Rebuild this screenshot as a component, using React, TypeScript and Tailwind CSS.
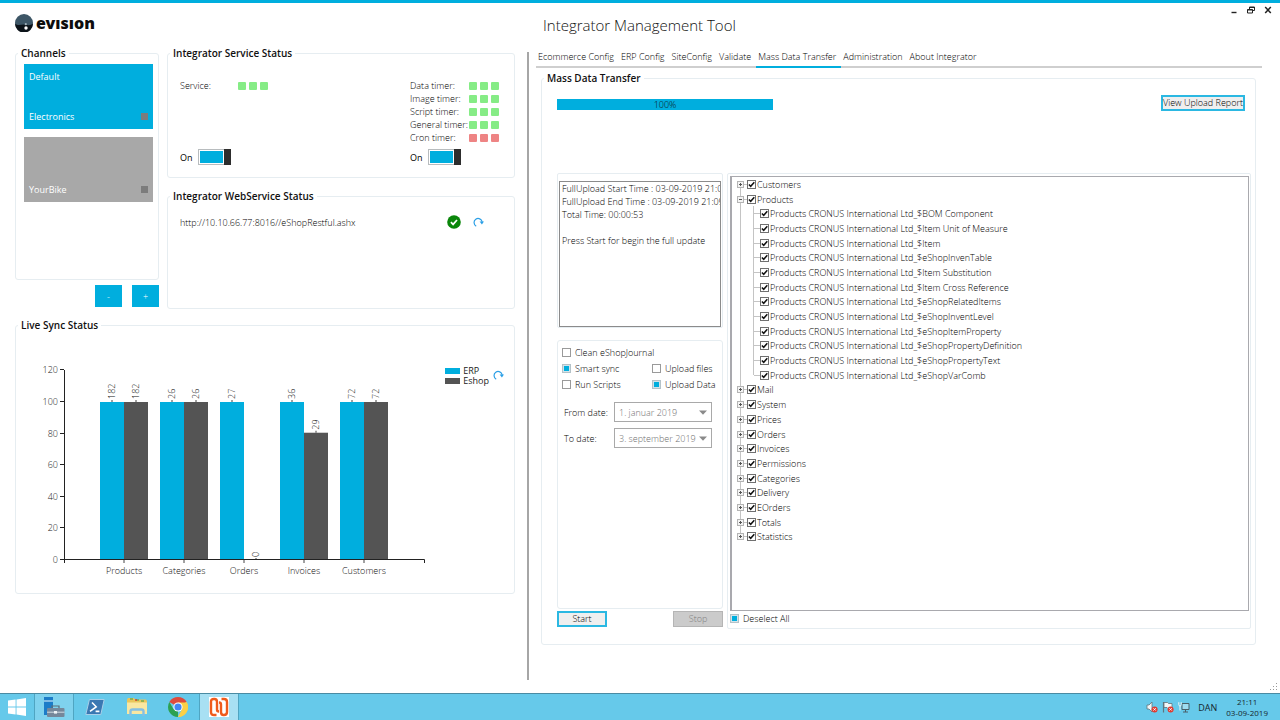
import React, { useState } from 'react';

interface PanelProps {
  title?: string;
  className?: string;
  bodyClassName?: string;
  children?: React.ReactNode;
}

interface Channel {
  title: string;
  name: string;
  active: boolean;
}

interface TreeNode {
  label: string;
  children?: string[];
}

const channels: Channel[] = [
  { title: 'Default', name: 'Electronics', active: true },
  { title: '', name: 'YourBike', active: false },
];

const timers = [
  { name: 'Data timer:', ok: true },
  { name: 'Image timer:', ok: true },
  { name: 'Script timer:', ok: true },
  { name: 'General timer:', ok: true },
  { name: 'Cron timer:', ok: false },
];

const tabs = ['Ecommerce Config', 'ERP Config', 'SiteConfig', 'Validate', 'Mass Data Transfer', 'Administration', 'About Integrator'];

const chartData = [
  { name: 'Products', erp: 182, eshop: 182 },
  { name: 'Categories', erp: 26, eshop: 26 },
  { name: 'Orders', erp: 27, eshop: 0 },
  { name: 'Invoices', erp: 36, eshop: 29 },
  { name: 'Customers', erp: 72, eshop: 72 },
];

const productTables = [
  'BOM Component',
  'Item Unit of Measure',
  'Item',
  'eShopInvenTable',
  'Item Substitution',
  'Item Cross Reference',
  'eShopRelatedItems',
  'eShopInventLevel',
  'eShopItemProperty',
  'eShopPropertyDefinition',
  'eShopPropertyText',
  'eShopVarComb',
];

const tree: TreeNode[] = [
  { label: 'Customers' },
  { label: 'Products', children: productTables.map((t) => `Products CRONUS International Ltd_$${t}`) },
  { label: 'Mail' },
  { label: 'System' },
  { label: 'Prices' },
  { label: 'Orders' },
  { label: 'Invoices' },
  { label: 'Permissions' },
  { label: 'Categories' },
  { label: 'Delivery' },
  { label: 'EOrders' },
  { label: 'Totals' },
  { label: 'Statistics' },
];

const logText = `FullUpload Start Time : 03-09-2019 21:08:15
FullUpload End Time : 03-09-2019 21:09:08
Total Time: 00:00:53

Press Start for begin the full update`;

const Panel: React.FC<PanelProps> = ({ title, className = '', bodyClassName = '', children }) => (
  <fieldset className={`min-w-0 rounded-[3px] border border-[#e6edf1] ${className}`}>
    {title && <legend className="ml-[2px] px-[3px] text-[10px] leading-[14px] font-semibold text-[#111]">{title}</legend>}
    <div className={bodyClassName}>{children}</div>
  </fieldset>
);

const Dots = ({ ok }: { ok: boolean }) => (
  <span className="flex gap-[3px]">
    {[0, 1, 2].map((i) => (
      <span key={i} className={`h-2 w-2 rounded-[1px] ${ok ? 'bg-[#86ec86]' : 'bg-[#ee8484]'}`} />
    ))}
  </span>
);

const Toggle = ({ id, label }: { id: string; label: string }) => {
  const [on, setOn] = useState(true);
  return (
    <div className="flex items-center">
      <label htmlFor={id} className="w-[18px] font-normal">{on ? 'On' : 'Off'}</label>
      <button
        id={id}
        type="button"
        role="switch"
        aria-checked={on}
        aria-label={label}
        onClick={() => setOn(!on)}
        className={`flex h-4 w-[33px] border border-[#b8bcbe] bg-white ${on ? 'justify-end' : 'flex-row-reverse'}`}
      >
        <span className={`m-px h-3 flex-1 ${on ? 'bg-[#00aede]' : 'bg-[#a6a6a6]'}`} />
        <span className="-my-px -mr-px h-4 w-[7px] bg-[#2d2d2d]" />
      </button>
    </div>
  );
};

const RefreshButton = ({ label }: { label: string }) => (
  <button type="button" aria-label={label}>
    <svg width="11" height="11" viewBox="0 0 11 11" fill="none">
      <path d="M3.2 9.2A4.1 4.1 0 1 1 9.2 5" stroke="#2b9fe6" strokeWidth="1.2" />
      <path d="M6.6 4.6H11L8.9 7.4Z" fill="#2b9fe6" />
    </svg>
  </button>
);

const CheckBox = ({ id, label, defaultChecked = false }: { id: string; label: string; defaultChecked?: boolean }) => (
  <div className="flex items-center gap-1">
    <input
      id={id}
      type="checkbox"
      defaultChecked={defaultChecked}
      className="h-[9px] w-[9px] shrink-0 appearance-none border border-[#9a9a9a] bg-white checked:border-[#b4c2c8] checked:bg-[#00aede] checked:shadow-[inset_0_0_0_1px_#d3e3ea]"
    />
    <label htmlFor={id} className="whitespace-nowrap">{label}</label>
  </div>
);

const TreeCheck = ({ id, label }: { id: string; label: string }) => (
  <>
    <span className="grid">
      <input
        id={id}
        type="checkbox"
        defaultChecked
        className="peer h-[9px] w-[9px] appearance-none border border-[#707070] bg-white [grid-area:1/1]"
      />
      <svg
        width="9"
        height="9"
        viewBox="0 0 9 9"
        fill="none"
        className="pointer-events-none invisible [grid-area:1/1] peer-checked:visible"
      >
        <path d="M1.9 4.4 3.7 6.3 7.3 2.2" stroke="#111" strokeWidth="1.5" />
      </svg>
    </span>
    <label htmlFor={id} className="pl-px whitespace-nowrap">{label}</label>
  </>
);

const TreeRow = ({ label, id, position, expanded }: { label: string; id: string; position: 'first' | 'middle' | 'last'; expanded: boolean }) => (
  <div className="flex flex-1 items-center">
    <span className="grid w-[7px] items-center justify-items-center self-stretch">
      <span
        className={`w-px bg-[#c4c4c4] [grid-area:1/1] ${
          position === 'first' ? 'h-1/2 self-end' : position === 'last' ? 'h-1/2 self-start' : 'h-full'
        }`}
      />
      <button type="button" aria-label={expanded ? `Collapse ${label}` : `Expand ${label}`} className="[grid-area:1/1]">
        <svg width="7" height="7" viewBox="0 0 7 7" fill="none" className="block">
          <rect x="0.5" y="0.5" width="6" height="6" fill="#f4f4f4" stroke="#b4b4b4" />
          <path d={expanded ? 'M2 3.5H5' : 'M2 3.5H5M3.5 2V5'} stroke="#555" />
        </svg>
      </button>
    </span>
    <span className="h-px w-[3px] bg-[#c4c4c4]" />
    <TreeCheck id={id} label={label} />
  </div>
);

const TreeLeaf = ({ label, id, last }: { label: string; id: string; last: boolean }) => (
  <div className="flex flex-1 items-center">
    <span className="flex w-[7px] justify-center self-stretch">
      <span className="w-px bg-[#c4c4c4]" />
    </span>
    <span className="ml-[9px] flex w-[7px] items-center self-stretch">
      <span className={`w-px bg-[#c4c4c4] ${last ? 'h-1/2 self-start' : 'h-full'}`} />
      <span className="h-px flex-1 bg-[#c4c4c4]" />
    </span>
    <TreeCheck id={id} label={label} />
  </div>
);

const DateSelect = ({ id, label, value }: { id: string; label: string; value: string }) => (
  <div className="flex items-center justify-between">
    <label htmlFor={id}>{label}</label>
    <span className="grid w-[98px] items-center">
      <select
        id={id}
        disabled
        className="h-5 w-full appearance-none border border-[#a9a9a9] bg-white pl-1 text-[#707070] opacity-100 [grid-area:1/1]"
      >
        <option>{value}</option>
      </select>
      <svg width="8" height="5" viewBox="0 0 8 5" className="pointer-events-none mr-[5px] justify-self-end [grid-area:1/1]">
        <path d="M0 0.4H8L4 4.8Z" fill="#8a8a8a" />
      </svg>
    </span>
  </div>
);

const Logo = () => (
  <div className="flex items-center gap-[3px]">
    <svg width="18" height="18" viewBox="0 0 18 18">
      <circle cx="9" cy="9" r="9" fill="#3d5666" />
      <path d="M0 9.6C3 12.4 6 10.4 9 10.6 12 10.8 15 12.2 18 9.6A9 9 0 0 1 0 9.6Z" fill="#0c1319" />
      <circle cx="10.8" cy="10.2" r="1.1" fill="#9fb0ba" />
      <circle cx="11" cy="14" r="1.7" fill="#fff" />
    </svg>
    <span className="font-['Noto_Sans'] text-[16px] leading-[18px] font-black text-[#0d0d0d]">evısıon</span>
  </div>
);

const scaleY = (value: number) => 195 - value * 1.58;

const SyncChart = () => (
  <svg
    width="400"
    height="220"
    viewBox="0 0 400 220"
    className="shrink-0 overflow-visible text-[9px]"
    role="img"
    aria-label="Live sync status chart"
  >
    {chartData.map((d, i) => {
      const center = 94 + i * 60;
      const max = Math.max(d.erp, d.eshop);
      const erpTop = scaleY((d.erp / max) * 100);
      const eshopTop = scaleY((d.eshop / max) * 100);
      return (
        <g key={d.name}>
          <rect x={center - 24} y={erpTop} width="24" height={195 - erpTop} fill="#00aede" />
          <rect x={center} y={eshopTop} width="24" height={195 - eshopTop} fill="#545454" />
          <path d={`M${center - 12} ${erpTop}v-2M${center + 12} ${eshopTop}v-2M${center} 195v3`} stroke="#444" />
          <text transform={`translate(${center - 9} ${erpTop - 3}) rotate(-90)`} fill="#111">{d.erp}</text>
          <text transform={`translate(${center + 15} ${eshopTop - 3}) rotate(-90)`} fill="#111">{d.eshop}</text>
          <text x={center} y="209" textAnchor="middle" fill="#111">{d.name}</text>
        </g>
      );
    })}
    <path d="M34.5 5V198M34 194.5H394.5V198" stroke="#222" fill="none" />
    {[0, 20, 40, 60, 80, 100, 120].map((v) => (
      <g key={v}>
        <path d={`M30 ${Math.round(scaleY(v)) - 0.5}H34`} stroke="#222" />
        <text x="28" y={scaleY(v) + 3} textAnchor="end" fill="#222">{v}</text>
      </g>
    ))}
  </svg>
);

const LeftPane = () => (
  <section className="min-w-0 pr-3 pl-[15px]">
    <div className="grid grid-cols-[144px_1fr] gap-x-2">
      <div>
        <Panel title="Channels" className="h-[234px]" bodyClassName="flex flex-col gap-2 pt-1 pr-[5px] pl-2">
          {channels.map((channel) => (
            <button
              key={channel.name}
              type="button"
              className={`flex h-[65px] flex-col justify-between px-[5px] py-[6px] text-left font-normal text-white ${
                channel.active ? 'bg-[#00aede]' : 'bg-[#a8a8a8]'
              }`}
            >
              <span>{channel.title}</span>
              <span className="flex w-full items-center justify-between">
                {channel.name}
                <span className="h-[7px] w-[7px] bg-[#7c7c7c]" />
              </span>
            </button>
          ))}
        </Panel>
        <div className="mt-[5px] flex justify-end gap-[10px]">
          <button type="button" aria-label="Remove channel" className="h-[22px] w-[27px] bg-[#00aede] text-white">-</button>
          <button type="button" aria-label="Add channel" className="h-[22px] w-[27px] bg-[#00aede] text-white">+</button>
        </div>
      </div>
      <div className="flex min-w-0 flex-col gap-[11px]">
        <Panel title="Integrator Service Status" className="h-[132px]" bodyClassName="flex justify-between pt-[19px] pr-[15px] pl-3">
          <div className="flex flex-col justify-between">
            <div className="flex items-center">
              <span className="w-[58px]">Service:</span>
              <Dots ok />
            </div>
            <Toggle id="service-toggle" label="Service" />
          </div>
          <div className="flex flex-col gap-[5px]">
            <div>
              {timers.map((timer) => (
                <div key={timer.name} className="flex items-center">
                  <span className="w-[59px] whitespace-nowrap">{timer.name}</span>
                  <Dots ok={timer.ok} />
                </div>
              ))}
            </div>
            <Toggle id="timer-toggle" label="Timers" />
          </div>
        </Panel>
        <Panel title="Integrator WebService Status" className="h-[120px]" bodyClassName="flex items-center justify-between pt-3 pr-[30px] pl-3">
          <span>http://10.10.66.77:8016//eShopRestful.ashx</span>
          <span className="flex items-center gap-3">
            <svg width="14" height="14" viewBox="0 0 14 14" fill="none">
              <circle cx="7" cy="7" r="6.8" fill="#0a860a" />
              <path d="M3.9 7.2 6.1 9.4 10 5" stroke="#fff" strokeWidth="1.7" />
            </svg>
            <RefreshButton label="Refresh web service" />
          </span>
        </Panel>
      </div>
    </div>
    <Panel title="Live Sync Status" className="mt-[9px] h-[276px]" bodyClassName="flex justify-between pt-[33px] pr-[10px] pl-[14px]">
      <SyncChart />
      <div className="flex items-start gap-1 pt-px">
        <ul className="text-[9px] leading-[10px] font-normal text-[#222]">
          <li className="flex items-center gap-[3px]"><span className="h-[6px] w-[15px] bg-[#00aede]" />ERP</li>
          <li className="flex items-center gap-[3px]"><span className="h-[6px] w-[15px] bg-[#545454]" />Eshop</li>
        </ul>
        <span className="pt-1"><RefreshButton label="Refresh sync status" /></span>
      </div>
    </Panel>
  </section>
);

const RightPane = () => {
  const [activeTab, setActiveTab] = useState('Mass Data Transfer');

  return (
    <section className="mt-[6px] min-w-0 border-l-2 border-[#a6a6a6] pr-[18px] pl-[7px]">
      <nav className="flex h-4 border-b-2 border-[#cfcfcf]">
        {tabs.map((tab) => (
          <button
            key={tab}
            type="button"
            onClick={() => setActiveTab(tab)}
            className={`-mb-[2px] flex h-4 items-start border-b-2 pr-[5px] pl-[2px] leading-[9px] whitespace-nowrap ${
              tab === activeTab ? 'border-[#00aede]' : 'border-transparent'
            }`}
          >
            {tab}
          </button>
        ))}
      </nav>
      <Panel title="Mass Data Transfer" className="mt-[3px] mr-[6px] ml-[5px] h-[574px]" bodyClassName="pr-1 pl-[15px]">
        <div className="flex items-start justify-between pt-[10px] pr-[6px]">
          <div className="mt-[4px] h-[11px] w-[216px] bg-[#00aede] text-center leading-[12px] text-[#111]" role="progressbar" aria-valuenow={100}>
            100%
          </div>
          <button type="button" className="h-4 border-2 border-[#2bb8e2] bg-[#efefef] leading-[12px] whitespace-nowrap">View Upload Report</button>
        </div>
        <div className="mt-[62px] grid grid-cols-[166px_1fr] gap-x-1">
          <div>
            <div className="h-[155px] rounded-[2px] border border-[#e6edf1] px-px pt-[7px]">
              <textarea
                readOnly
                aria-label="Upload log"
                value={logText}
                className="block h-[146px] w-full resize-none overflow-hidden border border-[#8b8b8b] pr-0 pl-[2px] whitespace-pre"
              />
            </div>
            <Panel className="mt-3 h-[269px]" bodyClassName="pt-[5px] pr-[10px] pl-1">
              <div className="grid grid-cols-[90px_1fr] gap-y-[3px]">
                <div className="col-span-2"><CheckBox id="clean" label="Clean eShopJournal" /></div>
                <CheckBox id="smart" label="Smart sync" defaultChecked />
                <CheckBox id="files" label="Upload files" />
                <CheckBox id="scripts" label="Run Scripts" />
                <CheckBox id="data" label="Upload Data" defaultChecked />
              </div>
              <div className="mt-[11px] flex flex-col gap-[6px] pl-[2px]">
                <DateSelect id="from-date" label="From date:" value="1. januar 2019" />
                <DateSelect id="to-date" label="To date:" value="3. september 2019" />
              </div>
            </Panel>
            <div className="mt-[2px] flex justify-between">
              <button type="button" className="h-4 w-[50px] border-2 border-[#2bb8e2] bg-[#efefef] leading-[12px]">Start</button>
              <button type="button" disabled className="h-4 w-[50px] border border-[#b5b5b5] bg-[#cbcbcb] leading-[14px] text-[#808080]">Stop</button>
            </div>
          </div>
          <div className="h-[456px] rounded-[2px] border border-[#e6edf1] pt-[2px] pr-px pl-[2px]">
            <div className="h-[435px] border border-l-2 border-[#a9a9ae] pl-[5px]">
              <div className="flex h-[367px] flex-col">
                {tree.map((node, i) => (
                  <React.Fragment key={node.label}>
                    <TreeRow
                      id={`node-${i}`}
                      label={node.label}
                      position={i === 0 ? 'first' : i === tree.length - 1 ? 'last' : 'middle'}
                      expanded={!!node.children}
                    />
                    {node.children?.map((child, j) => (
                      <TreeLeaf key={child} id={`node-${i}-${j}`} label={child} last={j === productTables.length - 1} />
                    ))}
                  </React.Fragment>
                ))}
              </div>
            </div>
            <div className="pt-px"><CheckBox id="deselect" label="Deselect All" defaultChecked /></div>
          </div>
        </div>
      </Panel>
    </section>
  );
};

const Taskbar = () => (
  <footer className="flex h-[27px] items-stretch justify-between border-t border-[#4a8ba3] bg-[#66c9ea] text-[#16262d]">
    <div className="flex items-stretch">
      <button type="button" aria-label="Start menu" className="flex w-[34px] items-center justify-center">
        <svg width="18" height="18" viewBox="0 0 18 18" fill="#fff">
          <path d="M0 2.6 7.6 1.5V8.6H0ZM8.5 1.4 18 0V8.6H8.5ZM0 9.4H7.6V16.5L0 15.4ZM8.5 9.4H18V18L8.5 16.6Z" />
        </svg>
      </button>
      <button type="button" aria-label="Server Manager" className="flex w-[40px] items-center justify-center border-x border-[#4fa5c2] bg-[#7fd2ee]">
        <svg width="22" height="22" viewBox="0 0 22 22" fill="none">
          <path d="M1 1H10V19H1Z" fill="#1c7cc8" />
          <path d="M1 5H10" stroke="#c5e6f7" strokeWidth="1.2" />
          <path d="M9 12V10H16V12" stroke="#5d6c78" strokeWidth="1.2" />
          <rect x="4" y="12" width="17.5" height="9" rx="1" fill="#75879a" />
          <path d="M4 16.2H21.5" stroke="#dbe5ec" strokeWidth="0.9" />
          <rect x="11" y="15" width="3" height="2.6" fill="#eef3f6" />
        </svg>
      </button>
      <button type="button" aria-label="PowerShell" className="flex w-[42px] items-center justify-center">
        <svg width="20" height="16" viewBox="0 0 20 16" fill="none">
          <path d="M4.4 0.5H19.2L15.8 15.5H0.8Z" fill="#3a78b2" stroke="#a9cfe8" />
          <path d="M7 3.5 11.2 7.8 5 12.4M10.6 12.4H14.4" stroke="#fff" strokeWidth="1.6" />
        </svg>
      </button>
      <button type="button" aria-label="File Explorer" className="flex w-[41px] items-center justify-center">
        <svg width="22" height="20" viewBox="0 0 22 20" fill="none">
          <path d="M1 2.5 2 1H8L9 2.5H20L21 4V17H1Z" fill="#e8c65c" />
          <path d="M4 2H7M10 3H13M15 4H18" stroke="#3a9d4d" strokeWidth="1.2" />
          <path d="M9 3H11" stroke="#d8432e" strokeWidth="1.4" />
          <path d="M1 5.5H21V17H1Z" fill="#f8e7a2" />
          <path d="M4.5 19V14.5Q4.5 12.5 6.5 12.5H15.5Q17.5 12.5 17.5 14.5V19" stroke="#83bfe4" strokeWidth="2.4" />
        </svg>
      </button>
      <button type="button" aria-label="Chrome" className="flex w-[42px] items-center justify-center">
        <svg width="20" height="20" viewBox="0 0 20 20">
          <path d="M10 10 1.34 5A10 10 0 0 1 18.66 5Z" fill="#dd4b3e" />
          <path d="M10 10 18.66 5A10 10 0 0 1 10 20L14.3 12.5Z" fill="#fbd047" />
          <path d="M10 10 10 20A10 10 0 0 1 1.34 5L5.7 12.5Z" fill="#2ca152" />
          <path d="M10 5.4H18.9A10 10 0 0 1 10 20L14 12.3Z" fill="#fbd047" />
          <circle cx="10" cy="10" r="4.6" fill="#fff" />
          <circle cx="10" cy="10" r="3.6" fill="#4285f4" />
        </svg>
      </button>
      <button type="button" aria-label="Integrator Management Tool" className="flex w-[40px] items-center justify-center border-x border-[#4fa5c2] bg-[#a8e0f3]">
        <svg width="20" height="20" viewBox="0 0 20 20" fill="none">
          <rect width="20" height="20" fill="#fff" />
          <path
            d="M7.5 18H5Q2 18 2 15V5Q2 2 5 2H5.5Q8 2 8 5V12.5Q8 14.5 10 14.5M12.5 2H15Q18 2 18 5V15Q18 18 15 18H14.5Q12 18 12 15V7.5Q12 5.5 10 5.5"
            stroke="#ef5b1c"
            strokeWidth="2.4"
          />
        </svg>
      </button>
    </div>
    <div className="flex items-center pr-3">
      <svg width="12" height="12" viewBox="0 0 12 12" fill="none">
        <path d="M1 4H3L6 1V11L3 8H1Z" fill="#f4f7f8" stroke="#60747c" strokeWidth="0.8" />
        <circle cx="8.6" cy="8.4" r="3" fill="#df3b31" />
        <path d="M7.4 7.2 9.8 9.6M9.8 7.2 7.4 9.6" stroke="#fff" strokeWidth="0.9" />
      </svg>
      <svg width="12" height="12" viewBox="0 0 12 12" fill="none" className="ml-1">
        <path d="M1.5 1V11.5" stroke="#60747c" strokeWidth="1.2" />
        <path d="M2 1.5H5.5L6.5 2.5H10V7.5H6L5 6.5H2Z" fill="#f4f7f8" stroke="#60747c" strokeWidth="0.8" />
        <circle cx="8.6" cy="8.4" r="3" fill="#df3b31" />
        <path d="M7.4 7.2 9.8 9.6M9.8 7.2 7.4 9.6" stroke="#fff" strokeWidth="0.9" />
      </svg>
      <svg width="12" height="12" viewBox="0 0 12 12" fill="none" className="ml-1">
        <path d="M4 2.5H11V8.5H4Z" fill="#9edcf1" stroke="#4a5f68" />
        <path d="M5 11H10M7.5 8.5V11" stroke="#4a5f68" />
        <path d="M0.8 1.2V3.6Q0.8 5 2 5T3.2 3.6V1.2M2 5V9.5" stroke="#eef5f7" />
      </svg>
      <span className="ml-2 font-normal">DAN</span>
      <span className="ml-[9px] text-center text-[8px] leading-[11px] font-normal">
        21:11
        <br />
        03-09-2019
      </span>
    </div>
  </footer>
);

const App: React.FC = () => (
  <div className="flex min-h-screen flex-col border-t-[3px] border-[#00aede] bg-white font-['Open_Sans','Noto_Sans',sans-serif] text-[9px] leading-[13px] font-light text-black">
    <header className="grid h-[43px] grid-cols-[527fr_753fr]">
      <div className="flex items-start pt-[11px] pl-[15px]">
        <Logo />
      </div>
      <div className="flex items-start justify-between pr-2 pl-4">
        <h1 className="pt-3 text-[15px] leading-[20px] text-[#111]">Integrator Management Tool</h1>
        <div className="flex gap-[9px] pt-[3px]">
          <button type="button" aria-label="Minimize">
            <svg width="8" height="8" viewBox="0 0 8 8"><path d="M1.5 6.5H6.5" stroke="#222" strokeWidth="1.4" /></svg>
          </button>
          <button type="button" aria-label="Restore">
            <svg width="8" height="8" viewBox="0 0 8 8" fill="none">
              <path d="M2.5 3V1H7.5V4.5H6M2.5 1.5H7.5M0.5 3.5H5.5V7H0.5ZM0.5 4H5.5" stroke="#222" />
            </svg>
          </button>
          <button type="button" aria-label="Close">
            <svg width="8" height="8" viewBox="0 0 8 8"><path d="M1.2 1 6.8 7M6.8 1 1.2 7" stroke="#222" strokeWidth="1.5" /></svg>
          </button>
        </div>
      </div>
    </header>
    <main className="grid flex-1 grid-cols-[527fr_753fr]">
      <LeftPane />
      <RightPane />
    </main>
    <div className="flex h-[13px] items-end justify-end pr-[2px] pb-[2px]">
      <svg width="8" height="8" viewBox="0 0 8 8" fill="#9a9a9a">
        <path d="M6 0h1v1h-1zM6 3h1v1h-1zM3 3h1v1h-1zM6 6h1v1h-1zM3 6h1v1h-1zM0 6h1v1h-1z" />
      </svg>
    </div>
    <Taskbar />
  </div>
);

export default App;
